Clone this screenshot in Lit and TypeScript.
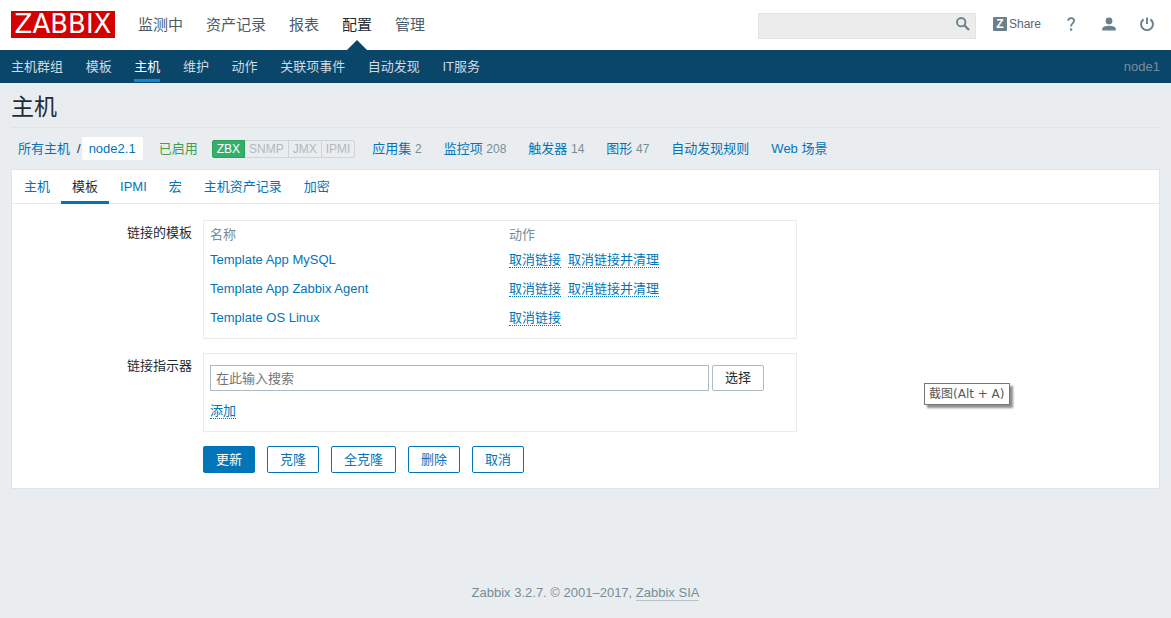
import { LitElement, html, css, svg } from "lit";
import { customElement } from "lit/decorators.js";
import { classMap } from "lit/directives/class-map.js";

interface TemplateRow {
  name: string;
  clearable: boolean;
}

const mainMenu = ["监测中", "资产记录", "报表", "配置", "管理"];
const subMenu = ["主机群组", "模板", "主机", "维护", "动作", "关联项事件", "自动发现", "IT服务"];
const interfaces = ["ZBX", "SNMP", "JMX", "IPMI"];
const hostLinks: { label: string; count?: number }[] = [
  { label: "应用集", count: 2 },
  { label: "监控项", count: 208 },
  { label: "触发器", count: 14 },
  { label: "图形", count: 47 },
  { label: "自动发现规则" },
  { label: "Web 场景" },
];
const tabs = ["主机", "模板", "IPMI", "宏", "主机资产记录", "加密"];
const templates: TemplateRow[] = [
  { name: "Template App MySQL", clearable: true },
  { name: "Template App Zabbix Agent", clearable: true },
  { name: "Template OS Linux", clearable: false },
];
const formActions = ["更新", "克隆", "全克隆", "删除", "取消"];

const searchIcon = svg`<svg width="14" height="14" viewBox="0 0 14 14" fill="none" stroke="currentColor" aria-hidden="true">
  <circle cx="5.2" cy="5.2" r="4.2" stroke-width="1.9"></circle>
  <path d="M8.3 8.3L13 13" stroke-width="2.3"></path></svg>`;
const helpIcon = svg`<svg width="14" height="14" viewBox="0 0 14 14" aria-hidden="true">
  <path d="M4.2 3.8C4.2 2.1 5.3 1.2 7.1 1.2S10.1 2.1 10.1 3.8C10.1 6 7.1 6.5 7.1 9.4" fill="none" stroke="currentColor" stroke-width="1.8"></path>
  <rect x="6" y="11.4" width="2.2" height="2.2" fill="currentColor"></rect></svg>`;
const userIcon = svg`<svg width="14" height="14" viewBox="0 0 14 14" fill="currentColor" aria-hidden="true">
  <circle cx="7" cy="3.9" r="3.4"></circle>
  <path d="M0.2 13.6V12C0.2 9.9 3.4 8.8 7 8.8S13.8 9.9 13.8 12V13.6Z"></path></svg>`;
const powerIcon = svg`<svg width="14" height="14" viewBox="0 0 14 14" fill="none" stroke="currentColor" stroke-width="1.9" aria-hidden="true">
  <path d="M7 0.5V7"></path>
  <path d="M3.6 2.4A5.9 5.9 0 1 0 10.4 2.4"></path></svg>`;

@customElement("app-root")
export class AppRoot extends LitElement {
  static styles = css`
    :host {
      display: flex;
      flex-direction: column;
      min-height: 100vh;
      box-sizing: border-box;
      background: #e9edf0;
      color: #1f2c33;
      font-family: "Liberation Sans", "Noto Sans CJK SC", sans-serif;
      font-size: 13px;
      line-height: 20px;
    }
    * { box-sizing: border-box; }
    a { color: #0275b8; text-decoration: none; }
    button, input { font: inherit; margin: 0; }
    svg { display: block; }

    .top {
      display: flex;
      align-items: stretch;
      height: 50px;
      padding: 0 17px 0 11px;
      background: #fff;
    }
    .logo {
      height: 27px;
      width: 104px;
      margin-top: 11px;
      background: #d40000;
      color: #fff;
      font-family: "DejaVu Sans", sans-serif;
      font-size: 26px;
      line-height: 27px;
      text-align: center;
    }
    .main-menu { display: flex; gap: 23px; margin-left: 23px; }
    .main-menu a {
      position: relative;
      color: #4a5c68;
      font-size: 15px;
      line-height: 50px;
    }
    .main-menu .active { color: #1f2c33; }
    .main-menu .active::after {
      content: "";
      position: absolute;
      left: 50%;
      bottom: 0;
      margin-left: -10px;
      border: 10px solid transparent;
      border-top: 0;
      border-bottom-color: #0a466a;
    }
    .tools {
      display: flex;
      align-items: center;
      margin-left: auto;
      padding-bottom: 2px;
      color: #6b808c;
    }
    .search {
      display: flex;
      align-items: center;
      width: 218px;
      height: 26px;
      margin: 4px 17px 0 0;
      border: 1px solid #e3e3e3;
      background: #ececec;
    }
    .search input {
      flex: 1;
      min-width: 0;
      padding: 0 6px;
      border: 0;
      outline: 0;
      background: none;
    }
    .icon-button { display: block; padding: 0; border: 0; background: none; color: inherit; }
    .search .icon-button { padding: 0 5px 4px; }
    .share { display: flex; align-items: center; gap: 2px; color: inherit; font-size: 12px; }
    .share-label { color: #566874; }
    .share-mark {
      width: 14px;
      height: 14px;
      border-radius: 1px;
      background: #6b808c;
      color: #fff;
      font-size: 12px;
      font-weight: 700;
      line-height: 14px;
      text-align: center;
    }
    .glyphs { display: flex; gap: 24px; margin-left: 23px; }

    .sub {
      display: flex;
      justify-content: space-between;
      height: 33px;
      padding: 0 11px;
      background: #0a466a;
    }
    .sub-menu a {
      display: inline-block;
      height: 32px;
      margin-right: 19px;
      color: #d0dae0;
      line-height: 33px;
    }
    .sub-menu .active { border-bottom: 3px solid #1583cf; color: #fff; }
    .node { color: #768d99; line-height: 33px; }

    main { padding: 0 11px; }
    h1 {
      margin: 0;
      padding: 8px 0 4px;
      border-bottom: 1px solid #dfe4e7;
      font-size: 23px;
      font-weight: 400;
      line-height: 32px;
    }
    .host-bar { display: flex; align-items: center; height: 41px; padding-left: 7px; }
    .crumb { display: flex; align-items: center; }
    .slash { margin: 0 1px 0 7px; }
    .current {
      padding: 2px 7px;
      border-radius: 2px;
      background: #fff;
      line-height: 19px;
    }
    .enabled { margin-left: 16px; color: #429e47; }
    .status { display: flex; margin: 0 17px 0 14px; font-size: 12px; line-height: 16px; }
    .status span {
      margin-left: -1px;
      padding: 0 4px;
      border: 1px solid #cdd5da;
      color: #afb9bf;
    }
    .status span:first-child { margin-left: 0; border-radius: 2px 0 0 2px; }
    .status span:last-child { border-radius: 0 2px 2px 0; }
    .status .on { position: relative; border-color: #2f9f5e; background: #34af67; color: #fff; }
    .host-links { display: flex; gap: 22px; }
    .count { color: #768d99; font-size: 12px; }

    .panel { border: 1px solid #dfe4e7; background: #fff; }
    .tabs { display: flex; height: 34px; padding-left: 1px; border-bottom: 1px solid #e6eaec; }
    .tabs a { height: 34px; padding: 0 11px; line-height: 33px; }
    .tabs .active { border-bottom: 3px solid #0275b8; color: #1f2c33; }

    .form {
      display: grid;
      grid-template-columns: 180px minmax(0, 594px);
      gap: 14px 11px;
      padding: 16px 0 15px;
    }
    .label { padding-top: 3px; text-align: right; }
    .box { border: 1px solid #e9ecee; padding: 4px 6px 6px; }
    table { width: 100%; border-collapse: collapse; table-layout: fixed; }
    th, td { padding: 0; text-align: left; }
    th { color: #768d99; font-weight: 400; }
    td { height: 29px; }
    th:first-child { width: 299px; }
    .dotted {
      display: inline-block;
      margin-right: 7px;
      padding: 0;
      border: 0;
      border-bottom: 1px dotted #0275b8;
      background: none;
      color: #0275b8;
      line-height: 14px;
    }
    .linker { padding: 11px 32px 10px 6px; }
    .picker { display: flex; gap: 3px; margin-bottom: 10px; }
    .picker input {
      flex: 1;
      min-width: 0;
      height: 26px;
      padding: 0 5px;
      border: 1px solid #acbbc2;
      border-radius: 0;
      background: #fff;
      color: #1f2c33;
    }
    .picker input::placeholder { color: #757575; opacity: 1; }
    .btn {
      height: 27px;
      padding: 0 12px;
      border: 1px solid #0275b8;
      border-radius: 2px;
      background: #fff;
      color: #0275b8;
    }
    .btn.primary { background: #0275b8; color: #fff; }
    .picker .btn { height: 26px; border-color: #acbbc2; color: #1f2c33; }
    .actions { display: flex; gap: 12px; grid-column: 2; }

    footer { margin-top: auto; padding-bottom: 15px; color: #768d99; text-align: center; }
    footer a { border-bottom: 1px solid #b9c4ca; color: inherit; }

    .hint {
      position: absolute;
      left: 924px;
      top: 383px;
      padding: 0 4px;
      border: 1px solid #767676;
      background: #fff;
      box-shadow: 3px 3px 2px #909090;
      color: #575757;
      font-family: "DejaVu Sans", "Noto Sans CJK SC", sans-serif;
      font-size: 12px;
      white-space: nowrap;
    }
  `;

  render() {
    return html`
      <header class="top">
        <a class="logo" href="#">ZABBIX</a>
        <nav class="main-menu">
          ${mainMenu.map((m) => html`<a href="#" class=${classMap({ active: m === "配置" })}>${m}</a>`)}
        </nav>
        <div class="tools">
          <form class="search" role="search">
            <input type="text" aria-label="搜索" />
            <button class="icon-button" type="button" aria-label="搜索">${searchIcon}</button>
          </form>
          <a class="share" href="#"><span class="share-mark">Z</span><span class="share-label">Share</span></a>
          <div class="glyphs">
            <button class="icon-button" aria-label="帮助">${helpIcon}</button>
            <button class="icon-button" aria-label="用户">${userIcon}</button>
            <button class="icon-button" aria-label="退出">${powerIcon}</button>
          </div>
        </div>
      </header>
      <div class="sub">
        <nav class="sub-menu">
          ${subMenu.map((m) => html`<a href="#" class=${classMap({ active: m === "主机" })}>${m}</a> `)}
        </nav>
        <span class="node">node1</span>
      </div>
      <main>
        <h1>主机</h1>
        <div class="host-bar">
          <div class="crumb">
            <a href="#">所有主机</a><span class="slash">/</span><a class="current" href="#">node2.1</a>
          </div>
          <span class="enabled">已启用</span>
          <div class="status">
            ${interfaces.map((i) => html`<span class=${classMap({ on: i === "ZBX" })}>${i}</span>`)}
          </div>
          <nav class="host-links">
            ${hostLinks.map(
              (l) => html`<span><a href="#">${l.label}</a>${l.count ? html` <span class="count">${l.count}</span>` : ""}</span>`
            )}
          </nav>
        </div>
        <section class="panel">
          <nav class="tabs">
            ${tabs.map((t) => html`<a href="#" class=${classMap({ active: t === "模板" })}>${t}</a>`)}
          </nav>
          <div class="form">
            <div class="label" id="linked">链接的模板</div>
            <div class="box">
              <table aria-labelledby="linked">
                <thead><tr><th>名称</th><th>动作</th></tr></thead>
                <tbody>
                  ${templates.map(
                    (t) => html`<tr>
                      <td><a href="#">${t.name}</a></td>
                      <td><button class="dotted">取消链接</button>${t.clearable
                        ? html`<button class="dotted">取消链接并清理</button>`
                        : ""}</td>
                    </tr>`
                  )}
                </tbody>
              </table>
            </div>
            <label class="label" for="indicator">链接指示器</label>
            <div class="box linker">
              <div class="picker">
                <input id="indicator" type="text" placeholder="在此输入搜索" />
                <button class="btn">选择</button>
              </div>
              <button class="dotted">添加</button>
            </div>
            <div class="actions">
              ${formActions.map((a, i) => html`<button class=${classMap({ btn: true, primary: i === 0 })}>${a}</button>`)}
            </div>
          </div>
        </section>
      </main>
      <footer>Zabbix 3.2.7. © 2001–2017, <a href="#">Zabbix SIA</a></footer>
      <div class="hint" role="tooltip">截图(Alt + A)</div>
    `;
  }
}
